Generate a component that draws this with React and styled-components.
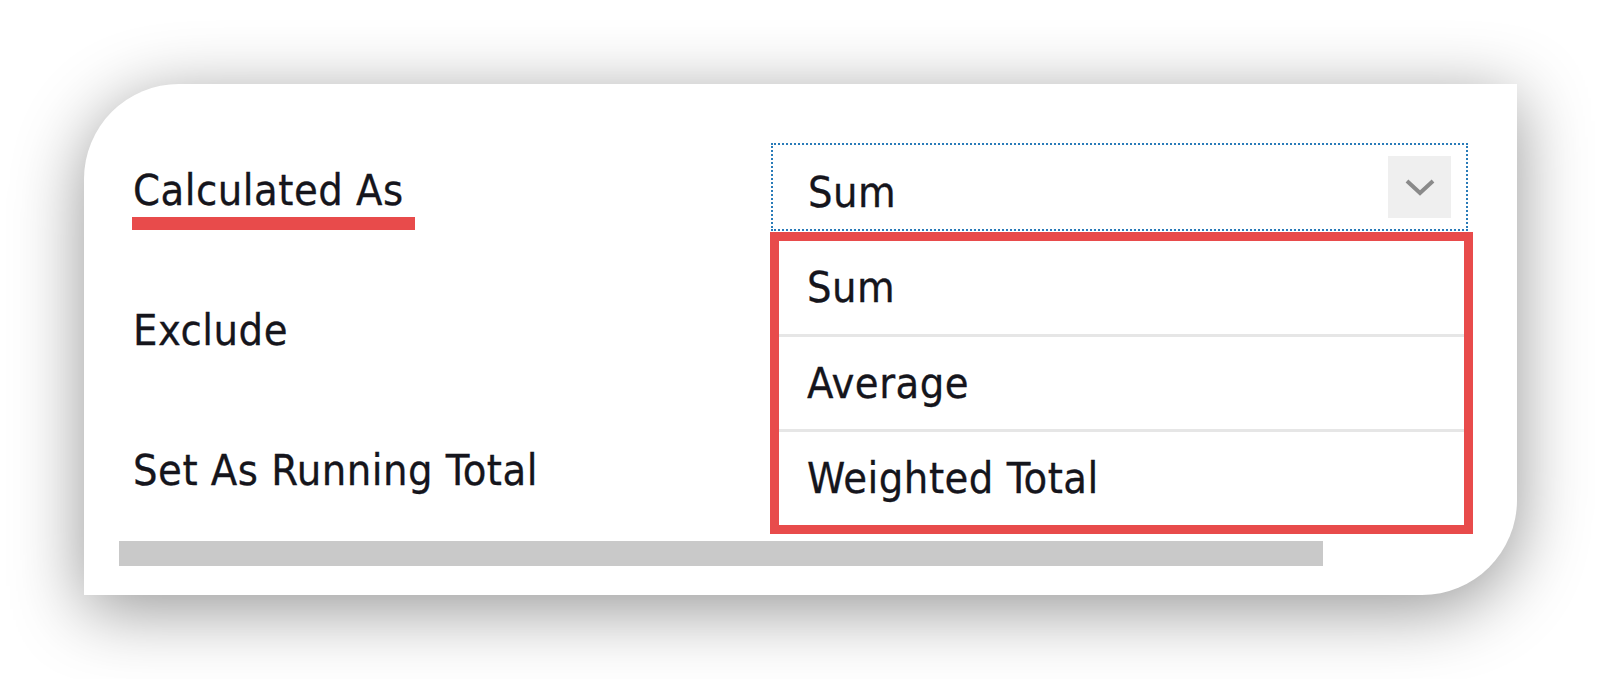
import React from "react"
import styled, { createGlobalStyle } from "styled-components"

const GlobalStyle = createGlobalStyle`
html, body {
margin: 0;
background: #fff;
}
body {
font-family: "DejaVu Sans Condensed", "DejaVu Sans", sans-serif;
font-stretch: semi-condensed;
color: #15151c;
}
`

const Page = styled.div`
padding: 84px 0 0 84px;
height: 679px;
box-sizing: border-box;
overflow: hidden;
`

const Card = styled.div`
width: 1433px;
height: 511px;
box-sizing: border-box;
background: #fff;
border-radius: 95px 0 95px 0;
box-shadow: 0 14px 70px rgba(0, 0, 0, 0.42);
padding-top: 36px;
display: flex;
flex-direction: column;
`

const Row = styled.div`
display: grid;
grid-template-columns: 638px 697px;
height: 140px;
padding-left: 49px;
align-items: center;
`

const Label = styled.div`
font-size: 43px;
letter-spacing: 0.5px;
line-height: 1;
position: relative;
justify-self: start;
-webkit-text-stroke: 0.3px #15151c;
${(p) => p.$marked && `
&::after {
content: "";
position: absolute;
left: -1px;
top: calc(100% + 5px);
width: 283px;
height: 13px;
background: #e84b4b;
}
`}
`

const Select = styled.div`
position: relative;
align-self: start;
margin-top: 23px;
height: 88px;
box-sizing: border-box;
border: 2px dotted #2a7bb8;
display: flex;
align-items: center;
justify-content: space-between;
padding: 0 15px 0 35px;
font-size: 43px;
letter-spacing: 0.5px;
line-height: 1;
-webkit-text-stroke: 0.3px #15151c;
`

const Value = styled.span`
margin-top: 10px;
`

const ChevronBox = styled.div`
width: 63px;
height: 62px;
background: #efefef;
display: flex;
align-items: center;
justify-content: center;
`

const Menu = styled.div`
position: absolute;
top: 87px;
left: -3px;
width: 703px;
height: 302px;
box-sizing: border-box;
border: 9px solid #e84b4b;
background: #fff;
display: flex;
flex-direction: column;
z-index: 2;
`

const Option = styled.div`
flex: 1;
display: flex;
align-items: center;
padding-left: 28px;
box-sizing: border-box;
border-bottom: ${(p) => (p.$last ? "none" : "3px solid #e6e6e6")};
`

const Scrollbar = styled.div`
margin: 1px 0 0 35px;
width: 1204px;
height: 25px;
background: #c9c9c9;
`

const options = ["Sum", "Average", "Weighted Total"]

const App = () => (
    <Page>
        <GlobalStyle />
        <Card>
            <Row>
                <Label $marked>Calculated As</Label>
                <Select>
                    <Value>Sum</Value>
                    <ChevronBox>
                        <svg width="32" height="20" viewBox="0 0 32 20">
                            <polyline points="3,4 16,16 29,4" fill="none" stroke="#8a8a8a" strokeWidth="4" />
                        </svg>
                    </ChevronBox>
                    <Menu>
                        {options.map((o, i) => (
                            <Option key={o} $last={i === options.length - 1}>{o}</Option>
                        ))}
                    </Menu>
                </Select>
            </Row>
            <Row>
                <Label>Exclude</Label>
            </Row>
            <Row>
                <Label>Set As Running Total</Label>
            </Row>
            <Scrollbar />
        </Card>
    </Page>
)

export default App
